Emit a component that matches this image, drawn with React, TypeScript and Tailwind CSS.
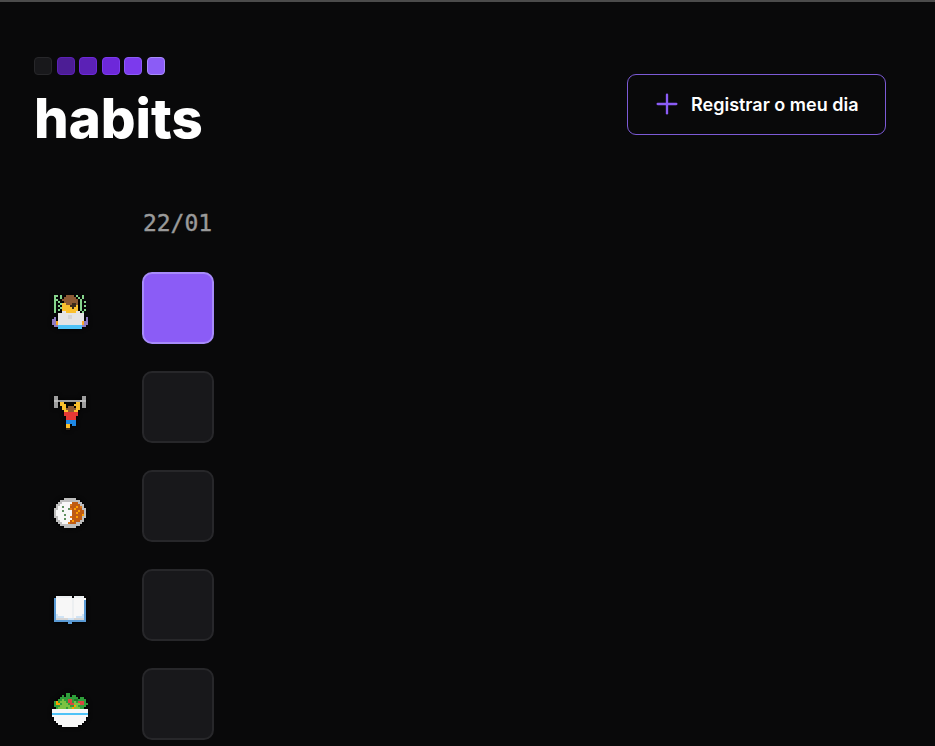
import { Plus } from "lucide-react";

const palette: Record<string, string> = {
  g: "#86d48c", h: "#8d5a34", y: "#fbc02d", o: "#f9a825", w: "#e4e4e4", W: "#f7f7f7", p: "#8e7cc3", b: "#4fc3f7",
  k: "#3a2a1a", s: "#9e9e9e", S: "#bdbdbd", r: "#e53935", B: "#1e88e5", c: "#bf5b12", C: "#e07a1a", d: "#5f8f5f",
  n: "#d5d5d5", l: "#5b9bd5", L: "#cfe3f5", G: "#2f9e3a", D: "#1f7a2a", E: "#7cc242", R: "#d9473f", f: "#ffa000", t: "#eceff1",
};

function Pixel({ rows }: { rows: string[] }) {
  const cells: React.ReactNode[] = [];
  rows.forEach((row, y) =>
    row.split("").forEach((ch, x) => {
      if (palette[ch]) cells.push(<rect key={x + "-" + y} x={x} y={y} width={1} height={1} fill={palette[ch]} />);
    })
  );
  return (
    <svg viewBox="0 0 18 18" width={36} height={36} shapeRendering="crispEdges" className="drop-shadow-[0_0_2px_#000]">
      {cells}
    </svg>
  );
}

const coder = [
  ".gg.g..hhhh.g..g..",
  ".g..g.hhhhhh.g.g..",
  ".gg..hhhhhhhh.g...",
  ".g.g..hhhhhhh.g.g.",
  ".g..gyyhhhkkh.g...",
  ".g.g.yyyykkky.g.g.",
  ".g..gyyyyykyy.g...",
  ".g.g.yyyyyyyy.g.g.",
  ".g...wwyyyyyww.g..",
  "...wwwwwwwwwwwww..",
  "...wwwwwnnwwwwww..",
  ".p.wwwwwnnwwwwww.p",
  "pp.wwwwwwwwwwwww.p",
  "ppowwwwwwwwwwwwopp",
  "ppowwwwwwwwwwwwopp",
  ".ppbbbbbbbbbbbbpp.",
  "...bbbbbbbbbbbb...",
];
const lifter = [
  "..................",
  ".ss............ss.",
  ".ss............ss.",
  ".SSsssssssssssSSS.",
  ".ss.yy......yy.ss.",
  ".ss.yyy....yyy.ss.",
  ".ss..yy.hhh.yy.ss.",
  ".....yyhhhhhyy....",
  "......yyhhhyy.....",
  "......rrrrrrr.....",
  "......rrrrrrr.....",
  ".......rrrrr......",
  ".......rrrrr......",
  ".......BBBBB......",
  ".......BBBBB......",
  ".......yy.BB......",
  ".......yy.........",
  ".......kk.........",
];
const curry = [
  "..................",
  "......SSSSSS......",
  "....SSSSSSSSSS....",
  "...SSWWWWWcccSS...",
  "..SSWWWWWCccccSS..",
  "..SWWdWWWcccfcCS..",
  ".SSWWWWWdCcfcccSS.",
  ".SWWWdWWWWcccfccS.",
  ".SWWWWWWWWccfcccS.",
  ".SWWWWdWWWcccccfS.",
  ".SSWWWWWWCccfccSS.",
  "..SWWWdWWWcccccS..",
  "..SSWWWWWcfcccSS..",
  "...SSWWWCcccSSS...",
  "....SSSSSSSSSS....",
  "......SSSSSS......",
  "..................",
  "..................",
];
const book = [
  "..................",
  "..................",
  "..tttttttt.ttttt..",
  ".lWWWWWWWWtWWWWWW.",
  ".lWWWWWWWWtWWWWWl.",
  ".lWWWWWWWWtWWWWWl.",
  ".lWWWWWWWWtWWWWWl.",
  ".lWWWWWWWWtWWWWWl.",
  ".lWWWWWWWWtWWWWWl.",
  ".lWWWWWWWWtWWWWWl.",
  ".lWWWWWWWWtWWWWWl.",
  ".lLWWWWWWWtWWWWLl.",
  ".lLLLLWWWWtWLLLLl.",
  ".lnnnnnnLLLnnnnnl.",
  ".llllllllllllllll.",
  "........ll........",
  "..................",
  "..................",
];
const salad = [
  ".......GG.........",
  ".....G.GG.GG......",
  "....GGGGGGGGG.GG..",
  "...GGEGGRRGDDGGGG.",
  ".GfGEEEGRRGEGRRRG.",
  ".GffGEEEGRREEERRGG",
  ".GGGEEEEEGGfEGGGG.",
  "..GEEEEGEEfEEEGG..",
  "WWWWWWWWWWWWWWWWWW",
  "WWWWWWWWWWWWWWWWWW",
  "bbbbbbbbbbbbbbbbbb",
  "WWWWWWWWWWWWWWWWWW",
  ".WWWWWWWWWWWWWWWW.",
  ".WWWWWWWWWWWWWWWW.",
  "..WWWWWWWWWWWWWW..",
  "...WWWWWWWWWWWW...",
  ".....WWWWWWWW.....",
  "..................",
];

const habits = [
  { art: coder, done: true, offset: "pt-[10px]" },
  { art: lifter, done: false, offset: "pt-[10px]" },
  { art: curry, done: false, offset: "pt-[16px]" },
  { art: book, done: false, offset: "pt-[10px]" },
  { art: salad, done: false, offset: "pt-[14px]" },
];

const logo = [
  "bg-[#18181b] border-[#27272a]",
  "bg-[#4c1d95] border-[#5b21b6]",
  "bg-[#5b21b6] border-[#6d28d9]",
  "bg-[#6d28d9] border-[#7c3aed]",
  "bg-[#7c3aed] border-[#8b5cf6]",
  "bg-[#8b5cf6] border-[#a78bfa]",
];

export default function App() {
  return (
    <div className="h-[746px] overflow-hidden bg-[#09090a] border-t-2 border-[#4b4b4b] font-['Inter',sans-serif] text-white">
      <header className="flex items-start justify-between pl-[34px] pr-[49px] pt-[55px]">
        <div>
          <div className="flex gap-[4.5px]">
            {logo.map((c) => (
              <div key={c} className={`h-[18px] w-[18px] rounded-[4px] border ${c}`} />
            ))}
          </div>
          <h1 className="mt-[3px] h-[80px] text-[54.6px] font-extrabold leading-[80px]">habits</h1>
        </div>
        <button className="mt-[17px] flex h-[61px] w-[259px] items-center gap-[8px] rounded-[9px] border border-[#7c5ad6] pb-[1px] pl-[23px] text-[18px] font-semibold">
          <Plus size={32} strokeWidth={1.75} className="text-[#8b5cf6]" />
          Registrar o meu dia
        </button>
      </header>
      <main className="mt-[22px] flex gap-[36px] pl-[34px]">
        <div className="w-[72px]">
          <div className="h-[92px]" />
          <div className="flex flex-col gap-[27px]">
            {habits.map((h, i) => (
              <div key={i} className={`flex h-[72px] items-center justify-center ${h.offset}`}>
                <Pixel rows={h.art} />
              </div>
            ))}
          </div>
        </div>
        <div className="w-[72px]">
          <div className="h-[92px] pr-[1px] pt-[28px] text-center font-['DejaVu_Sans_Mono',monospace] text-[23px] leading-[30px] text-[#9a9a9a] [-webkit-text-stroke:0.4px_#9a9a9a]">
            22/01
          </div>
          <div className="flex flex-col gap-[27px]">
            {habits.map((h, i) => (
              <div
                key={i}
                className={
                  h.done
                    ? "h-[72px] w-[72px] rounded-[10px] border-2 border-[#a78bfa] bg-[#8b5cf6]"
                    : "h-[72px] w-[72px] rounded-[10px] border-2 border-[#27272a] bg-[#18181b]"
                }
              />
            ))}
          </div>
        </div>
      </main>
    </div>
  );
}
